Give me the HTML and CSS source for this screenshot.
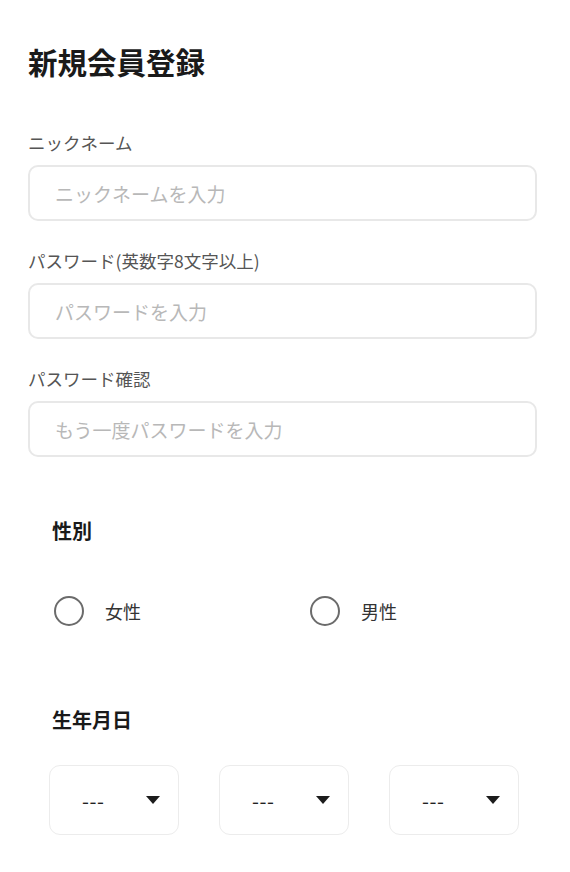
FILE: index.html
```html
<!DOCTYPE html>
<html lang="ja">
  <head>
    <title>新規会員登録</title>
    <meta charset="utf-8" />
    <meta name="viewport" content="width=device-width initial-scale=1" />
    <link rel="stylesheet" href="styles.css">
  </head>

  <body>
    <main class="signup">
      <h1 class="signup__title">新規会員登録</h1>

      <form class="form">
        <label class="field">
          <span class="field__label">ニックネーム</span>
          <input class="field__input" type="text" placeholder="ニックネームを入力" />
        </label>

        <label class="field">
          <span class="field__label">パスワード(英数字8文字以上)</span>
          <input class="field__input" type="password" placeholder="パスワードを入力" />
        </label>

        <label class="field">
          <span class="field__label">パスワード確認</span>
          <input class="field__input" type="password" placeholder="もう一度パスワードを入力" />
        </label>

        <section class="group group--gender">
          <h2 class="group__title">性別</h2>
          <div class="radios">
            <label class="radio">
              <input class="radio__input" type="radio" name="gender" value="female" />
              <span class="radio__text">女性</span>
            </label>
            <label class="radio">
              <input class="radio__input" type="radio" name="gender" value="male" />
              <span class="radio__text">男性</span>
            </label>
          </div>
        </section>

        <section class="group group--birthday">
          <h2 class="group__title">生年月日</h2>
          <div class="selects">
            <div class="select">
              <span class="select__value">---</span>
              <span class="select__arrow"></span>
            </div>
            <div class="select">
              <span class="select__value">---</span>
              <span class="select__arrow"></span>
            </div>
            <div class="select">
              <span class="select__value">---</span>
              <span class="select__arrow"></span>
            </div>
          </div>
        </section>
      </form>
    </main>
  </body>
</html>
```

FILE: styles.css
```css
* {
  box-sizing: border-box;
}

html,
body {
  margin: 0;
  padding: 0;

  background-color: #fff;
  font-family: "Noto Sans CJK JP", "Noto Sans", sans-serif;
  color: #1a1a1a;
}

.signup {
  padding: 41px 33px 40px 28px;
}

.signup__title {
  margin: 0;

  font-size: 29.5px;
  font-weight: 700;
  line-height: 40px;
}

.form {
  display: flex;
  flex-direction: column;

  margin-top: 50px;
}

.field {
  display: flex;
  flex-direction: column;
  gap: 10px;

  margin-bottom: 28px;
}

.field__label {
  font-size: 17.5px;
  line-height: 24px;
  color: #555;
}

.field__input {
  height: 56px;
  padding: 0 25px;

  border: 2px solid #e8e8e8;
  border-radius: 10px;
  outline: none;

  font-family: inherit;
  font-size: 19px;
  color: #333;
}

.field__input::placeholder {
  color: #b8b8b8;
}

.group {
  padding-left: 24px;
}

.group--gender {
  margin-top: 32px;
}

.group--birthday {
  margin-top: 80px;
}

.group__title {
  margin: 0;

  font-size: 20px;
  font-weight: 700;
  line-height: 28px;
}

.radios {
  display: grid;
  grid-template-columns: 256px 1fr;

  margin-top: 51px;
}

.radio {
  display: flex;
  align-items: center;
  gap: 21px;
}

.radio__input {
  appearance: none;
  margin: 0 0 0 2px;

  width: 30px;
  height: 30px;

  border: 2.5px solid #6b6b6b;
  border-radius: 50%;
}

.radio__text {
  font-size: 18px;
  line-height: 30px;
  color: #333;
}

.selects {
  display: flex;
  gap: 40px;

  margin-top: 31px;
  margin-left: -3px;
}

.select {
  display: flex;
  align-items: center;
  justify-content: space-between;

  width: 130px;
  height: 70px;
  padding: 0 18px 0 32px;

  border: 1.5px solid #ececec;
  border-radius: 11px;
}

.select__value {
  font-size: 20px;
  color: #222;
  letter-spacing: 0.5px;
}

.select__arrow {
  width: 0;
  height: 0;

  border-left: 7.5px solid transparent;
  border-right: 7.5px solid transparent;
  border-top: 8px solid #1c1c1c;
}
```
